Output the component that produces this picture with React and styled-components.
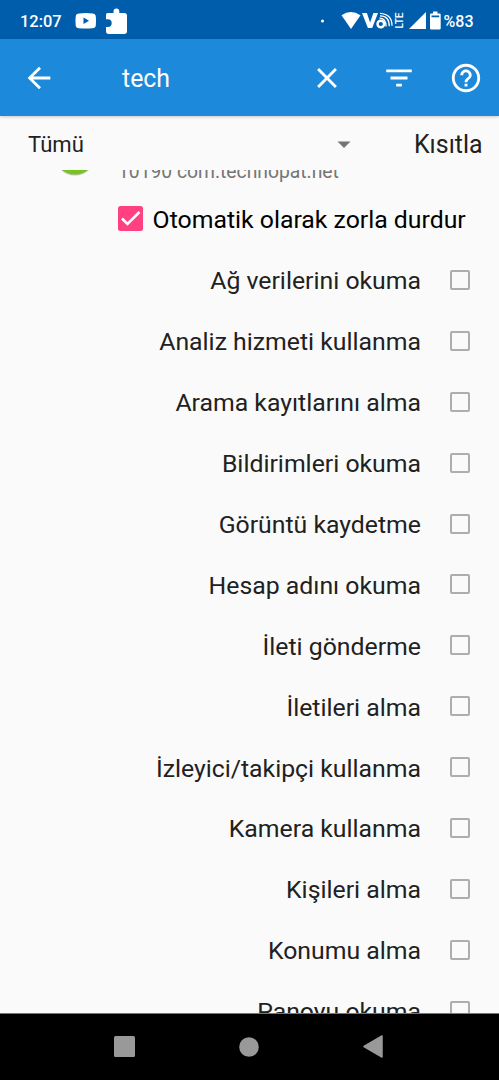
import React from "react";
import styled, { createGlobalStyle } from "styled-components";

const GlobalStyle = createGlobalStyle`
  * { box-sizing: border-box; }
  body { margin: 0; background: #fafafa; font-family: Roboto, sans-serif; }
  svg { display: block; flex: none; }
`;

const Screen = styled.div`
  width: 499px;
  height: 1080px;
  display: flex;
  flex-direction: column;
  overflow: hidden;
  background: #fafafa;
`;

const StatusBar = styled.header`
  height: 39px;
  flex: none;
  display: flex;
  align-items: center;
  justify-content: space-between;
  padding: 4px 25px 0 20px;
  background: #005dab;
  color: #fff;
  font-size: 16.4px;
  line-height: 20px;
  font-weight: 500;
`;

const StatusGroup = styled.div`
  height: 35px;
  display: flex;
  align-items: center;
`;

const Clock = styled.span`
  width: 55px;
`;

const Battery = styled.span`
  width: 30.5px;
  font-size: 16px;
  white-space: nowrap;
`;

const Toolbar = styled.div`
  height: 77px;
  flex: none;
  display: flex;
  align-items: center;
  padding: 0 16.5px 0 22px;
  background: #1c89db;
  color: #fff;
  box-shadow: 0 1px 3px rgba(0, 0, 0, 0.2);
`;

const Query = styled.span`
  flex: 1;
  padding: 3px 0 0 66px;
  font-size: 24.9px;
  line-height: 34px;
`;

const Actions = styled.div`
  display: flex;
`;

const Action = styled.div`
  margin-left: ${(p) => p.$gap}px;
`;

const FilterBar = styled.div`
  height: 54px;
  flex: none;
  display: flex;
  align-items: center;
  padding: 3px 17px 0 28px;
  color: #212121;
  line-height: 30px;
`;

const FilterName = styled.span`
  flex: 1;
  padding-bottom: 2px;
  font-size: 22.1px;
`;

const Restrict = styled.span`
  width: 68px;
  margin-left: 63px;
  padding-top: 1px;
  font-size: 24.9px;
  white-space: nowrap;
`;

const List = styled.main`
  flex: 1;
  min-height: 0;
  overflow: hidden;
`;

const AppHeader = styled.div`
  height: 19px;
  display: flex;
  align-items: flex-end;
  padding-left: 55px;
`;

const PackageName = styled.span`
  margin-left: 23px;
  height: 28px;
  font-size: 19.3px;
  line-height: 28px;
  color: #757575;
  margin-bottom: 3px;
`;

const ForceStop = styled.div`
  height: 61px;
  display: flex;
  align-items: center;
  padding-left: 118px;
  color: #000;
  font-size: 24.8px;
  white-space: nowrap;
`;

const CheckedBox = styled.span`
  width: 25px;
  height: 25px;
  margin: 0 9.6px 2px 0;
  border-radius: 2.5px;
  background: #ff4081;
`;

const PermissionRow = styled.label`
  height: 60.9px;
  display: flex;
  align-items: center;
  justify-content: flex-end;
  padding: 1px 29px 0 0;
  color: #212121;
  font-size: 24.8px;
  white-space: nowrap;
`;

const EmptyBox = styled.span`
  width: 20px;
  height: 20px;
  margin: 0 0 2px 29px;
  border: 2px solid #adadad;
  border-radius: 2px;
`;

const NavBar = styled.nav`
  height: 67px;
  flex: none;
  display: flex;
  align-items: center;
  justify-content: space-between;
  padding: 0 116px 1px 114px;
  background: #000;
  border-top: 1px solid #777;
`;

const Icon = ({ d }) => (
  <svg width="34" height="34" viewBox="0 0 24 24" fill="currentColor">
    <path d={d} />
  </svg>
);

const BACK = "M20 11H7.83l5.59-5.59L12 4l-8 8 8 8 1.41-1.41L7.83 13H20v-2z";
const CLOSE =
  "M19 6.41L17.59 5 12 10.59 6.41 5 5 6.41 10.59 12 5 17.59 6.41 19 12 13.41 17.59 19 19 17.59 13.41 12z";
const FILTER = "M10 18h4v-2h-4v2zM3 6v2h18V6H3zm3 7h12v-2H6v2z";
const HELP =
  "M11 18h2v-2h-2v2zm1-16C6.48 2 2 6.48 2 12s4.48 10 10 10 10-4.48 10-10S17.52 2 12 2zm0 18c-4.41 0-8-3.59-8-8s3.59-8 8-8 8 3.59 8 8-3.59 8-8 8zm0-14c-2.21 0-4 1.79-4 4h2c0-1.1.9-2 2-2s2 .9 2 2c0 2-3 1.75-3 5h2c0-2.25 3-2.5 3-5 0-2.21-1.79-4-4-4z";

const Notifications = () => (
  <svg width="54" height="35" viewBox="75 4 54 35" fill="#fff">
    <path
      fillRule="evenodd"
      d="M79 13.4q6.600-.8 13.500 0q3 .2 3.300 3q.5 4.500 0 9q-.3 2.600-3.300 2.800q-6.900.6-13.500 0q-3-.2-3.300-2.800q-.5-4.500 0-9q.3-2.800 3.300-3zM83.500 17.600v6.400l5.500-3.200z"
    />
    <path d="M107.500 13h6v-1.500a2.900 2.900 0 0 1 5.800 0V13h5q2.700 0 2.700 2.700v15.600q0 2.700-2.700 2.700h-15.600q-2.700 0-2.700-2.700v-4.300h1.800a3.900 3.900 0 0 0 0-7.800h-1.800v-4.500q0-1.700 1.500-1.700z" />
  </svg>
);

const Signals = () => (
  <svg width="124" height="35" viewBox="320 4 124 35" fill="#fff">
    <circle cx="322.500" cy="21" r="1.500" />
    <path d="M341.500 15.300q9.300-6.400 19 0L351 29z" />
    <path d="M362 13h4.900l3.200 9.400 3.300-9.400h4.600l-5.800 15h-4.300z" />
    <circle cx="380.800" cy="24" r="3.300" fill="none" stroke="#fff" strokeWidth="2.400" />
    <g fill="none" stroke="#fff" strokeWidth="1.300">
      <path d="M379.500 18.100q6.500 0 6.600 8.500" />
      <path d="M380 15.800q9.300 0 9.300 10.500" />
      <path d="M380 13.300q12.200.8 12 12.500" />
    </g>
    <text
      transform="translate(402.800 28.500) rotate(-90)"
      fontFamily="Roboto, sans-serif"
      fontSize="10.300"
      fontWeight="500"
      textLength="16"
      lengthAdjust="spacingAndGlyphs"
    >
      LTE
    </text>
    <path d="M426 12v17h-17z" />
    <path
      fillRule="evenodd"
      d="M433 11.500h4.500v2h2q1.200 0 1.200 1.200v13.600q0 1.200-1.200 1.200h-8.300q-1.200 0-1.200-1.200v-13.600q0-1.200 1.200-1.200h1.800zM431.500 15.600v1.600h7.700v-1.600z"
    />
  </svg>
);

const PERMISSIONS = [
  "Ağ verilerini okuma",
  "Analiz hizmeti kullanma",
  "Arama kayıtlarını alma",
  "Bildirimleri okuma",
  "Görüntü kaydetme",
  "Hesap adını okuma",
  "İleti gönderme",
  "İletileri alma",
  "İzleyici/takipçi kullanma",
  "Kamera kullanma",
  "Kişileri alma",
  "Konumu alma",
  "Panoyu okuma",
];

export default function App() {
  return (
    <Screen>
      <GlobalStyle />
      <StatusBar>
        <StatusGroup>
          <Clock>12:07</Clock>
          <Notifications />
        </StatusGroup>
        <StatusGroup>
          <Signals />
          <Battery>%83</Battery>
        </StatusGroup>
      </StatusBar>
      <Toolbar>
        <Icon d={BACK} />
        <Query>tech</Query>
        <Actions>
          <Icon d={CLOSE} />
          <Action $gap={38.5}>
            <Icon d={FILTER} />
          </Action>
          <Action $gap={32.5}>
            <Icon d={HELP} />
          </Action>
        </Actions>
      </Toolbar>
      <FilterBar>
        <FilterName>Tümü</FilterName>
        <svg width="14" height="8" viewBox="0 0 14 8">
          <path d="M.5.5h13L7 7z" fill="#757575" />
        </svg>
        <Restrict>Kısıtla</Restrict>
      </FilterBar>
      <List>
        <AppHeader>
          <svg width="40" height="19" viewBox="0 0 40 19">
            <circle cx="20" cy="-15" r="20.500" fill="#c4c4c4" />
            <circle cx="20" cy="-16" r="20.500" fill="#76c322" />
          </svg>
          <PackageName>10190 com.technopat.net</PackageName>
        </AppHeader>
        <ForceStop>
          <CheckedBox>
            <svg width="25" height="25" viewBox="0 0 25 25">
              <path d="M4 12.500l5.500 5.500L21.500 6" fill="none" stroke="#fff" strokeWidth="2.600" />
            </svg>
          </CheckedBox>
          Otomatik olarak zorla durdur
        </ForceStop>
        {PERMISSIONS.map((name) => (
          <PermissionRow key={name}>
            {name}
            <EmptyBox />
          </PermissionRow>
        ))}
      </List>
      <NavBar>
        <svg width="21" height="21" viewBox="0 0 21 21">
          <rect width="21" height="21" rx="1.500" fill="#999" />
        </svg>
        <svg width="20" height="20" viewBox="0 0 20 20">
          <circle cx="10" cy="10" r="9.800" fill="#999" />
        </svg>
        <svg width="20" height="23" viewBox="0 0 20 23">
          <path
            d="M1 11.500L19 1v21z"
            fill="#999"
            stroke="#999"
            strokeWidth="1.500"
            strokeLinejoin="round"
          />
        </svg>
      </NavBar>
    </Screen>
  );
}
